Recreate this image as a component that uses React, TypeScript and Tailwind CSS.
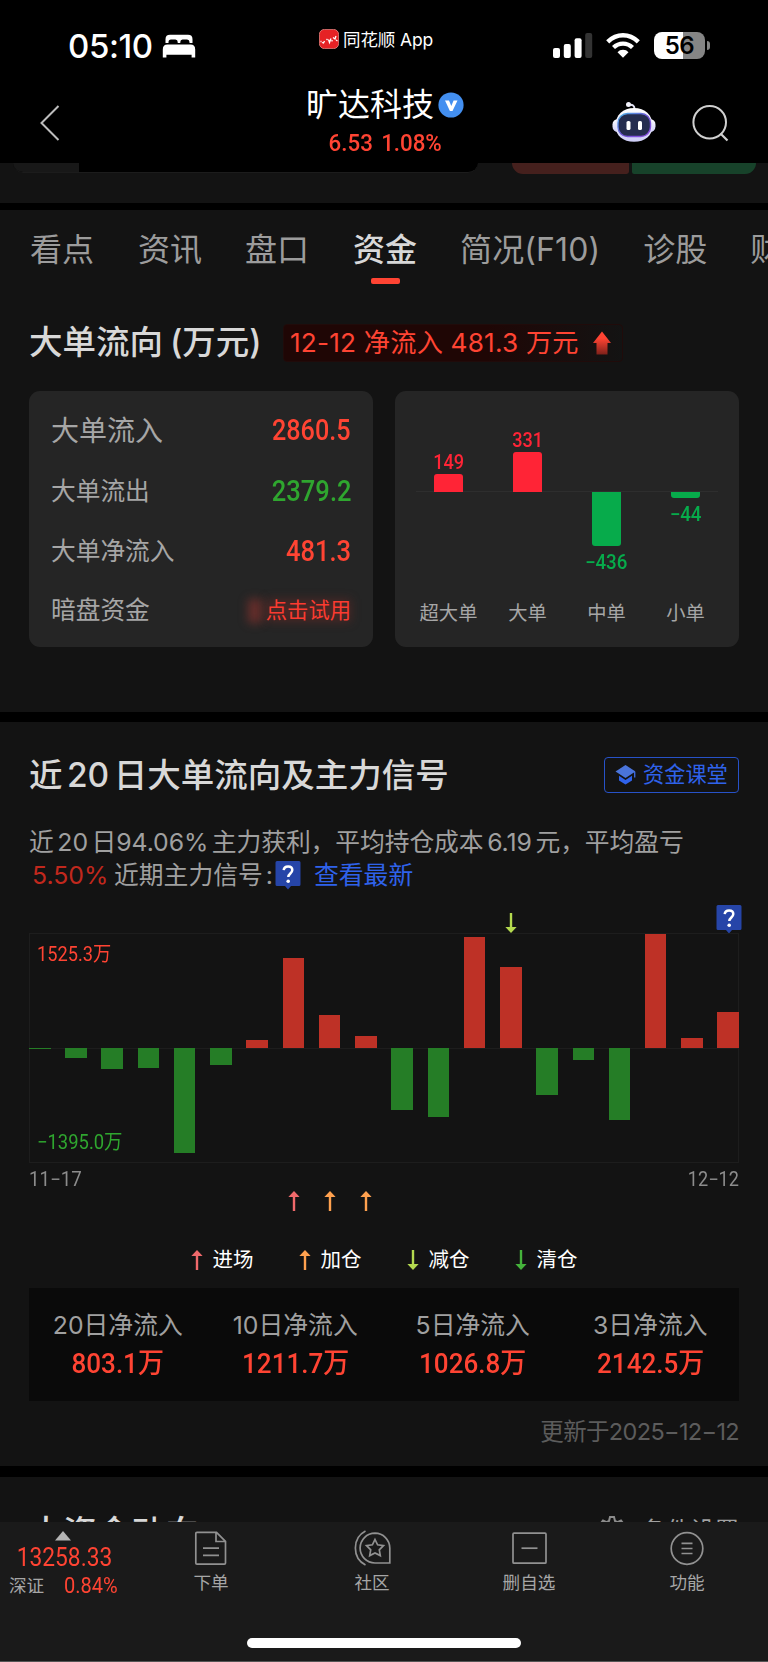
import React from 'react'
import clsx from 'clsx'

const tabs = [
  { label: '看点', left: 'ml-[30px]' },
  { label: '资讯', left: 'ml-[44px]' },
  { label: '盘口', left: 'ml-[43px]' },
  { label: '资金', left: 'ml-[44px]', active: true },
  { label: '简况(F10)', left: 'ml-[43px]' },
  { label: '诊股', left: 'ml-[43px]' },
  { label: '财务', left: 'ml-[43px]' },
]

const orders = [
  { label: '超大单', value: 149, size: 18 },
  { label: '大单', value: 331, size: 40.5 },
  { label: '中单', value: -436, size: 54 },
  { label: '小单', value: -44, size: 6 },
]

// bar height in px, negative is outflow
const days = [-1, -10, -21, -19.5, -104.5, -17, 8, 90.5, 33.5, 12.5, -61.5, -68.5, 111, 81.5, -47, -11.5, -71.5, 114.5, 10.5, 36.5]

const legend = [
  { label: '进场', color: '#f0696b' },
  { label: '加仓', color: '#ffa14f' },
  { label: '减仓', color: '#b4d94f', down: true },
  { label: '清仓', color: '#45b33b', down: true },
]

const totals = [
  { label: '20日净流入', value: '803.1万' },
  { label: '10日净流入', value: '1211.7万' },
  { label: '5日净流入', value: '1026.8万' },
  { label: '3日净流入', value: '2142.5万' },
]

// condensed digits used for every price and amount
function Num({ children, className }: { children: React.ReactNode; className?: string }) {
  return (
    <span className={clsx("inline-block whitespace-nowrap font-['Roboto','Noto_Sans_CJK_SC',sans-serif]", className)}>
      {children}
    </span>
  )
}

function Arrow({ color, down }: { color: string; down?: boolean }) {
  return (
    <svg width="12" height="20" viewBox="0 0 12 20" className={clsx('shrink-0', down && 'rotate-180')}>
      <path d="M6 4v16" stroke={color} strokeWidth="2.4" />
      <path d="M6 0l5.6 6H.4z" fill={color} />
    </svg>
  )
}

function SignalBadge() {
  return (
    <svg width="26" height="29" viewBox="0 0 26 29" className="shrink-0">
      <path d="M2 0h22a1.500 1.500 0 0 1 1.500 1.500v22a1.500 1.500 0 0 1-1.500 1.500h-8l-3 3.500-3-3.500H2a1.500 1.500 0 0 1-1.500-1.500v-22A1.500 1.500 0 0 1 2 0z" fill="#2645a8" />
      <path d="M8.700 9.200c.2-2.500 2-3.700 4.400-3.700 2.500 0 4.200 1.400 4.200 3.600 0 3.300-4 3.500-4 7" fill="none" stroke="#fff" strokeWidth="2.500" />
      <circle cx="13.200" cy="20.300" r="1.800" fill="#fff" />
    </svg>
  )
}

function StatusBar() {
  return (
    <div className="flex h-[76px] items-start text-white">
      <div className="ml-[68px] mt-[26px] w-[86px] text-[33px] font-medium leading-10 tracking-[-0.4px] whitespace-nowrap">05:10</div>
      <svg width="34" height="24" viewBox="0 0 34 24" className="ml-[8px] mt-[34px]" fill="#fff">
        <path d="M3.500 9V5.200Q3.500.8 8 .8h18q4.500 0 4.500 4.400V9h-3V8q0-2.500-2.400-2.500h-4.600Q18.300 5.500 18.300 8v1h-2.600V8q0-2.500-2.300-2.500H9Q6.500 5.500 6.500 8v1z" />
        <path d="M.8 15.500q0-5 4.700-5h23q4.700 0 4.700 5v8.100h-3.600v-2.800H4.400v2.800H.8z" />
      </svg>
      <svg width="20" height="20" viewBox="0 0 20 20" className="ml-[123px] mt-[29px]">
        <rect x=".4" y=".4" width="19.200" height="19.200" rx="5" fill="#e52225" stroke="#ec8682" strokeWidth=".8" />
        <path d="M1.500 12.500h1M3 13.500l1.500.5 1-2M7.500 10l1 1M9.500 10.500l1 3 1.500-4M13 12.500v-1.500M14 8.500l2 1.500 1-3M17 11l1.500 1" stroke="#fff" strokeWidth="1.300" fill="none" />
      </svg>
      <div className="ml-1 mt-[28px] w-[92px] text-[17.500px] leading-6 tracking-[-0.1px] whitespace-nowrap">同花顺 App</div>
      <svg width="40" height="26" viewBox="0 0 40 26" className="ml-[118px] mt-[33px]">
        <rect x="0" y="15" width="7" height="10" rx="2" fill="#fff" />
        <rect x="10.800" y="11" width="7" height="14" rx="2" fill="#fff" />
        <rect x="21.600" y="5.200" width="7" height="19.800" rx="2" fill="#fff" />
        <rect x="32.200" y="0" width="7" height="25" rx="2" fill="#333" />
      </svg>
      <svg width="34" height="25" viewBox="0 0 34 25" className="ml-[13px] mt-[33px]">
        <path d="M1.700 8.800Q8.500 2.200 17 2.200t15.300 6.600" fill="none" stroke="#fff" strokeWidth="4.400" />
        <path d="M7.500 14.600Q11.500 10.600 17 10.600t9.500 4" fill="none" stroke="#fff" strokeWidth="4.200" />
        <path d="M17 16.800q3.400 0 5.500 2.400L17 24.800l-5.500-5.600q2.100-2.400 5.500-2.400z" fill="#fff" />
      </svg>
      <div className="ml-[14px] mt-[32px] flex h-[27px] w-[51px] items-center justify-center overflow-hidden rounded-[8px] bg-[linear-gradient(90deg,#fff_56%,#858585_56%)] text-[24px] font-semibold leading-none tracking-[-0.5px] text-black">
        56
      </div>
      <div className="ml-[2px] mt-[41px] h-[9px] w-[3px] rounded-r-full bg-[#858585]" />
    </div>
  )
}

function Robot() {
  return (
    <svg width="44" height="42" viewBox="0 0 44 42">
      <defs>
        <linearGradient id="shell" x1="0" y1="0" x2="0" y2="1">
          <stop offset="0" stopColor="#fff" />
          <stop offset="1" stopColor="#cdcdf6" />
        </linearGradient>
        <linearGradient id="rim" x1="0" y1="0" x2="1" y2="1">
          <stop offset="0" stopColor="#4bb6e8" />
          <stop offset=".5" stopColor="#6d55d8" />
          <stop offset="1" stopColor="#8f4fe0" />
        </linearGradient>
      </defs>
      <path d="M22.500 8Q22.500 3 17 4" fill="none" stroke="#e4e4f5" strokeWidth="2" />
      <circle cx="16.500" cy="3.600" r="2.500" fill="#f2f2fb" />
      <rect x=".5" y="18" width="43" height="13" rx="5.500" fill="url(#shell)" />
      <path d="M22 7C33 7 40.500 13.500 40.500 24.500 40.500 35 33 40.700 22 40.700S3.500 35 3.500 24.500C3.500 13.500 11 7 22 7z" fill="url(#shell)" />
      <rect x="6" y="12.500" width="32.500" height="23" rx="9.500" fill="#252d4f" stroke="url(#rim)" strokeWidth="1.400" />
      <rect x="14.500" y="20" width="4" height="9" rx="1.600" fill="#fff" />
      <rect x="26" y="20" width="4" height="9" rx="1.600" fill="#fff" />
    </svg>
  )
}

function Header() {
  return (
    <div className="flex h-[87px] items-start">
      <svg width="20" height="36" viewBox="0 0 20 36" className="ml-[40px] mt-[29px]">
        <path d="M18.500 1L1.500 18l17 17" fill="none" stroke="#bdbdbd" strokeWidth="2" />
      </svg>
      <div className="ml-[240px] mt-[10px] flex w-[170px] flex-col items-center">
        <div className="flex w-full items-center pl-[6px]">
          <h1 className="text-[32px] leading-[38px] text-white">旷达科技</h1>
          <svg width="26" height="26" viewBox="0 0 26 26" className="ml-1">
            <circle cx="13" cy="13" r="12.600" fill="#438ff0" />
            <path d="M7 8.500h4l2.300 5.500L15.600 8.500h3.900l-5 10.500h-2.600z" fill="#fff" />
          </svg>
        </div>
        <Num className="mt-[4px] scale-x-[0.91] text-[24.500px] leading-[30px] font-medium [word-spacing:-1.500px] text-[#ff4433]">6.53&nbsp; 1.08%</Num>
      </div>
      <div className="ml-[142px] mt-[25px]">
        <Robot />
      </div>
      <svg width="38" height="38" viewBox="0 0 38 38" className="ml-[35px] mt-[28px]">
        <circle cx="18.700" cy="18.300" r="16.300" fill="none" stroke="#d0d0d0" strokeWidth="2" />
        <path d="M29.500 29.500l7 7" stroke="#d0d0d0" strokeWidth="2.200" />
      </svg>
    </div>
  )
}

function CutOffCards() {
  return (
    <div className="flex h-10 bg-[#131313]">
      <div className="ml-[13px] flex h-[10px] w-[465px] overflow-hidden rounded-b-[20px] border-b border-[#1c1c1c] bg-black">
        <div className="w-[66px] bg-[#181818]" />
      </div>
      <div className="ml-[34px] h-[11px] w-[117px] rounded-br-[4px] rounded-bl-[18px] bg-[#45201d]" />
      <div className="ml-[3px] h-[11px] w-[124px] rounded-br-[20px] rounded-bl-[4px] bg-[#17422a]" />
    </div>
  )
}

function Tabs() {
  return (
    <nav className="flex h-[90px] overflow-hidden pt-[20px] text-[32px] leading-[40px] text-[#9c9c9c]">
      {tabs.map((t) => (
        <div key={t.label} className={clsx('flex shrink-0 flex-col items-center whitespace-nowrap', t.left)}>
          <span className={clsx(t.active && 'font-medium text-[#d8d8d8]', t.label.length > 2 && 'tracking-[0.1px]')}>{t.label}</span>
          {t.active && <div className="mt-[8px] h-[6px] w-[29px] rounded-[2px] bg-[#ff4433]" />}
        </div>
      ))}
    </nav>
  )
}

function FlowCard() {
  return (
    <div className="flex h-[256px] w-[344px] flex-col rounded-[11px] bg-[#252525] pt-[9px] pr-[22px] pl-[22px] text-[24.700px] text-[#a6a6a6]">
      <div className="flex h-[61px] items-center justify-between">
        <span className="text-[28px]">大单流入</span>
        <Num className="origin-right scale-x-[0.84] pb-[3px] text-[30px] font-medium text-[#ff4433]">2860.5</Num>
      </div>
      <div className="flex h-[62px] items-center justify-between">
        <span>大单流出</span>
        <Num className="origin-right scale-x-[0.88] text-[29px] font-medium text-[#2fa62f]">2379.2</Num>
      </div>
      <div className="flex h-[57px] items-center justify-between">
        <span>大单净流入</span>
        <Num className="origin-right scale-x-[0.88] text-[29px] font-medium text-[#ff4433]">481.3</Num>
      </div>
      <div className="flex h-[61px] items-center justify-between">
        <span>暗盘资金</span>
        <span className="relative text-[21.300px] text-[#fb3b30]">
          <span className="absolute top-[4px] left-[-18px] h-6 w-3.5 bg-[#a53630]/50 blur-[5px]" />
          <span className="absolute inset-x-0 inset-y-1 bg-[#7a2a26]/40 blur-[5px]" />
          <span className="relative">点击试用</span>
        </span>
      </div>
    </div>
  )
}

function OrderChart() {
  return (
    <div className="h-[256px] w-[344px] rounded-[11px] bg-[#252525] px-[14px]">
      <div className="relative flex text-[19.500px] leading-5">
        <div className="absolute inset-x-[7px] top-[100px] h-px bg-[#2e2e2e]" />
        {orders.map((o) => (
          <div key={o.label} className="relative flex w-[79px] flex-col items-center">
            <div className="flex h-[101px] w-full flex-col items-center justify-end">
              {o.value > 0 && (
                <>
                  <Num className="mb-px scale-x-[0.93] font-medium text-[#ff2436]">{o.value}</Num>
                  <div className="w-[29px] rounded-t-[3px] bg-[#ff2436]" style={{ height: o.size }} />
                </>
              )}
            </div>
            <div className="flex h-[94px] flex-col items-center">
              {o.value < 0 && (
                <>
                  <div className="w-[29px] rounded-b-[3px] bg-[#07ab4b]" style={{ height: o.size }} />
                  <Num className="mt-[7px] scale-x-[0.96] font-medium text-[#07ab4b]">−{-o.value}</Num>
                </>
              )}
            </div>
            <span className="mt-[15px] text-[19.300px] leading-6 text-[#a6a6a6]">{o.label}</span>
          </div>
        ))}
      </div>
    </div>
  )
}

function DailyChart() {
  return (
    <div className="flex flex-col">
      <div className="flex h-[29px] items-start pt-px">
        <div className="mt-[8px] ml-[476px]">
          <Arrow color="#b4d94f" down />
        </div>
        <div className="ml-[199px]">
          <SignalBadge />
        </div>
      </div>
      <div className="relative h-[230px] w-[710px] border border-[#1d1d1d]">
        <div className="absolute top-[114px] h-px w-full bg-[#1d1d1d]" />
        <div className="-ml-px flex h-full w-[710px] justify-between">
          {days.map((h, i) => (
            <div key={i} className="relative w-[21.500px]">
              <div
                className={clsx('absolute w-full', h > 0 ? 'bottom-[114px] bg-[#be3126]' : 'top-[114px] bg-[#257d26]')}
                style={{ height: Math.abs(h) }}
              />
            </div>
          ))}
        </div>
        <Num className="absolute top-[8px] left-[7px] origin-left scale-x-[0.91] text-[20px] leading-6 text-[#ff4433]">1525.3万</Num>
        <Num className="absolute bottom-[8px] left-[7px] origin-left scale-x-[0.92] text-[20px] leading-6 text-[#2fa62f]">−1395.0万</Num>
      </div>
      <div className="mt-[5px] flex h-[23px] justify-between text-[19.500px] leading-6 text-[#8c8c8c]">
        <Num className="origin-left scale-x-[0.96]">11−17</Num>
        <Num className="origin-right scale-x-[0.93]">12−12</Num>
      </div>
      <div className="flex h-[20px] gap-[24.200px] pl-[258.500px]">
        <Arrow color="#f0696b" />
        <Arrow color="#ffa14f" />
        <Arrow color="#ffa14f" />
      </div>
    </div>
  )
}

function SignalSection() {
  return (
    <section className="h-[744px] bg-[#131313] px-[29px] pt-[32px]">
      <div className="flex h-[42px] items-center justify-between">
        <h2 className="text-[33.500px] font-medium [word-spacing:-4.500px] whitespace-nowrap text-[#d8d8d8]">近 20 日大单流向及主力信号</h2>
        <div className="flex h-[36px] w-[135px] items-center rounded-[4px] border border-[#2752c8] pl-[10px] text-[21.200px] whitespace-nowrap text-[#2f62ea]">
          <svg width="21" height="20" viewBox="0 0 21 20" className="mr-[7px]">
            <path d="M10.500 0L20.500 6.500 10.500 13 .5 6.500z" fill="#4a74da" />
            <path d="M19.700 7v5.500" stroke="#3a66d8" strokeWidth="1.400" />
            <path d="M4 10.800l6.500 4.200L17 10.800v4.700L10.500 19.500 4 15.500z" fill="#2f62ea" />
          </svg>
          资金课堂
        </div>
      </div>
      <div className="mt-[30px] text-[24.800px] leading-[33px] text-[#a0a0a0]">
        <p className="tracking-[-0.1px] [word-spacing:-3.200px] whitespace-nowrap">近 20 日94.06% 主力获利，平均持仓成本 6.19 元，平均盈亏</p>
        <div className="flex h-[33px] items-center whitespace-nowrap">
          <span className="ml-[3px] w-[82px] text-[#c1281d]">5.50%</span>
          <span className="flex w-[161px] gap-[3px]">
            近期主力信号<span>:</span>
          </span>
          <SignalBadge />
          <span className="ml-[13px] text-[#2f62ea]">查看最新</span>
        </div>
      </div>
      <div className="mt-[12px]">
        <DailyChart />
      </div>
      <div className="mt-[34px] flex h-[30px] justify-center gap-[45px] text-[20.500px] leading-[30px] text-white">
        {legend.map((l) => (
          <div key={l.label} className="flex items-center gap-[10px]">
            <Arrow color={l.color} down={l.down} />
            {l.label}
          </div>
        ))}
      </div>
      <div className="mt-[13px] grid h-[113px] grid-cols-4 bg-[#0a0a0a] pt-[19px] text-center">
        {totals.map((t) => (
          <div key={t.label} className="flex flex-col items-center whitespace-nowrap">
            <span className="text-[24.800px] leading-[36px] text-[#a0a0a0]">{t.label}</span>
            <Num className="mt-px scale-x-[0.93] text-[28px] leading-[40px] font-medium text-[#ff4433]">{t.value}</Num>
          </div>
        ))}
      </div>
      <div className="mt-[13px] text-right text-[23.500px] leading-9 tracking-[-0.65px] text-[#5c5c5c]">更新于2025−12−12</div>
    </section>
  )
}

function NextSection() {
  return (
    <section className="flex h-[45px] items-start justify-between overflow-hidden bg-[#131313] px-[29px] text-[#a0a0a0]">
      <h2 className="mt-[35px] text-[34px] leading-[42px] font-medium text-[#d8d8d8]">大资金动向</h2>
      <div className="mt-[35px] flex text-[24.300px] leading-[36px]">
        <svg width="26" height="26" viewBox="0 0 26 26" className="mt-[4px] mr-[17px]" fill="none" stroke="#8c8c8c" strokeWidth="2">
          <path d="M10 5l1-4h4l1 4 2.500 1.200L22 4.500l3 4-2.500 3v3l2.500 3-3 4-3.500-1.700L16 21l-1 4h-4l-1-4-2.500-1.200L4 21.500l-3-4 2.500-3v-3L1 8.500l3-4 3.500 1.700z" />
          <circle cx="13" cy="13" r="4" />
        </svg>
        条件设置
      </div>
    </section>
  )
}

const iconProps = { width: 38, height: 36, viewBox: '0 0 38 36', fill: 'none', stroke: '#919191', strokeWidth: 1.7 }

function BottomBar() {
  return (
    <footer className="h-[140px] border-b border-[#555] bg-[#1a1a1a] text-[17.600px] leading-6 text-[#a6a6a6]">
      <div className="flex h-[116px] pt-[8px]">
        <div className="flex w-[128px] flex-col items-center">
          <svg width="16" height="10" viewBox="0 0 16 10" className="mt-px mr-[2px]">
            <path d="M8 0l8 9.500H0z" fill="#b4b4b4" />
          </svg>
          <Num className="mt-[4px] scale-x-[0.91] text-[25px] leading-[26px] text-[#ff4433]">13258.33</Num>
          <div className="mt-[3px] flex w-full pl-[9px] whitespace-nowrap">
            深证
            <Num className="ml-[20px] origin-left scale-x-[0.91] text-[22px] text-[#ff4433]">0.84%</Num>
          </div>
        </div>
        <div className="ml-[63px] flex w-10 flex-col items-center">
          <svg {...iconProps}>
            <path d="M5 2.300h19.500l9 9V33q0 1.200-1.200 1.200H5q-1.200 0-1.200-1.200V3.500q0-1.200 1.200-1.200zM24 2.500v9h9.500M11 18.200h16M11 25.300h16" />
          </svg>
          <span className="mt-[5px] whitespace-nowrap">下单</span>
        </div>
        <div className="ml-[121px] flex w-10 flex-col items-center">
          <svg {...iconProps}>
            <path d="M12.500 1C-1 8-1 28 12.500 35" />
            <path d="M22 3.200a14.900 14.900 0 1 0 0 29.800h14.800V18A14.900 14.900 0 0 0 22 3.200z" />
            <path d="M22 9.500l2.600 5.300 5.900.9-4.200 4.100 1 5.800-5.300-2.700-5.300 2.700 1-5.800-4.200-4.100 5.900-.9z" />
          </svg>
          <span className="mt-[5px] whitespace-nowrap">社区</span>
        </div>
        <div className="ml-[107px] flex w-[60px] flex-col items-center">
          <svg {...iconProps}>
            <rect x="3" y="3.200" width="33" height="30" rx="1" />
            <path d="M11.500 18.200h16" />
          </svg>
          <span className="mt-[5px] whitespace-nowrap">删自选</span>
        </div>
        <div className="ml-[108px] flex w-10 flex-col items-center">
          <svg {...iconProps}>
            <circle cx="19" cy="18.500" r="15.800" />
            <path d="M13.500 13.300h11M13.500 18.500h11M13.500 23.500h11" />
          </svg>
          <span className="mt-[5px] whitespace-nowrap">功能</span>
        </div>
      </div>
      <div className="mx-auto h-[10px] w-[274px] rounded-full bg-white" />
    </footer>
  )
}

export default function App() {
  return (
    <div className="h-[1662px] w-[768px] overflow-hidden bg-black font-['Inter','Noto_Sans_CJK_SC',sans-serif]">
      <StatusBar />
      <Header />
      <CutOffCards />
      <div className="mt-[7px] h-[502px] bg-[#131313]">
        <Tabs />
        <div className="mt-[21px] flex h-[42px] items-center px-[29px] pt-px">
          <h2 className="w-[254px] text-[33.500px] font-medium [word-spacing:-2px] whitespace-nowrap text-[#d8d8d8]">大单流向 (万元)</h2>
          <div className="mt-px flex h-[38px] w-[340px] items-center rounded-[4px] border border-[#200b0a] bg-[linear-gradient(90deg,#1f0605_60%,#131313)] pl-[6px] text-[26.200px] tracking-[0.2px] whitespace-nowrap text-[#ff4433]">
            12-12 净流入 481.3 万元
            <svg width="20" height="24" viewBox="0 0 20 24" className="ml-[13px]">
              <defs>
                <linearGradient id="up" x1="0" y1="0" x2="0" y2="1">
                  <stop offset=".3" stopColor="#ff4433" />
                  <stop offset="1" stopColor="#7e211a" />
                </linearGradient>
              </defs>
              <path d="M10 0.500L19 12H15.500v11.500H4.500V12H1z" fill="url(#up)" />
            </svg>
          </div>
        </div>
        <div className="mt-[28px] flex gap-[22px] px-[29px]">
          <FlowCard />
          <OrderChart />
        </div>
      </div>
      <div className="mt-[10px]">
        <SignalSection />
      </div>
      <div className="mt-[11px]">
        <NextSection />
      </div>
      <BottomBar />
    </div>
  )
}
